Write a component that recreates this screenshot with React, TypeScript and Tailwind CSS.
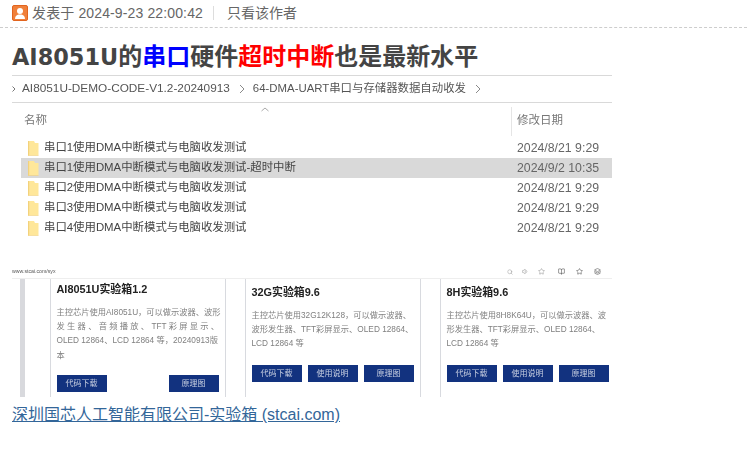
import { BookOpen, Heart, Layers, Search, Star, Volume1 } from "lucide-react";

const cjk = "font-['Liberation_Sans','Noto_Sans_CJK_SC',sans-serif]";

const folders = [
  { name: "串口1使用DMA中断模式与电脑收发测试", date: "2024/8/21 9:29" },
  { name: "串口1使用DMA中断模式与电脑收发测试-超时中断", date: "2024/9/2 10:35", active: true },
  { name: "串口2使用DMA中断模式与电脑收发测试", date: "2024/8/21 9:29" },
  { name: "串口3使用DMA中断模式与电脑收发测试", date: "2024/8/21 9:29" },
  { name: "串口4使用DMA中断模式与电脑收发测试", date: "2024/8/21 9:29" },
];

function FolderIcon() {
  return (
    <svg width="12" height="16" viewBox="0 0 12 16" className="shrink-0">
      <path d="M1 1h6l1 2h3.500v12.500H1z" fill="#ffe79a" />
      <path d="M1 1h1.200v14.500H1z" fill="#f2d27c" />
      <path d="M1 15h10.500v.5H1z" fill="#eccb78" />
    </svg>
  );
}

function AuthorIcon() {
  return (
    <svg width="16" height="16" viewBox="0 0 16 16" className="shrink-0 mt-[-1px]">
      <rect x="0.500" y="0.500" width="15" height="15" rx="1.500" fill="#f0803a" stroke="#e2641e" />
      <circle cx="8" cy="6" r="3" fill="#fff" />
      <path d="M3 14c0-3 2-4 3.500-4.500h3C11 10 13 11 13 14z" fill="#fff" />
    </svg>
  );
}

function Chevron() {
  return (
    <svg width="6" height="10" viewBox="0 0 6 10" className="shrink-0">
      <path d="M1 1l4 4-4 4" fill="none" stroke="#8a8a8a" strokeWidth="1" />
    </svg>
  );
}

function CardButton({ label }: { label: string }) {
  return (
    <div className="w-[50px] h-[17px] bg-[#12327f] text-white/75 text-[8px] leading-[17px] text-center">
      {label}
    </div>
  );
}

function Card({
  title,
  lines,
  buttons,
  spread,
  marginTop,
}: {
  title: string;
  lines: string[];
  buttons: string[];
  spread?: boolean;
  marginTop: string;
}) {
  return (
    <div className="w-[176px] shrink-0 h-full border-x border-[#d8dadf] pl-[5.500px] pr-[6.500px] bg-white">
      <div className={`text-[10.900px] font-bold text-[#222] leading-[16px] ${marginTop}`}>{title}</div>
      <div className="mt-[9px] text-[8.250px] leading-[14.200px] text-[#808080] h-[56px]">
        {lines.map((line) => (
          <div key={line} className="whitespace-nowrap">
            {line}
          </div>
        ))}
      </div>
      <div className={`flex ${spread ? "justify-between mt-[13px]" : "gap-[6px] mt-[0px]"}`}>
        {buttons.map((b) => (
          <CardButton key={b} label={b} />
        ))}
      </div>
    </div>
  );
}

export default function App() {
  return (
    <div className={`w-[747px] h-[465px] bg-white overflow-hidden ${cjk}`}>
      {/* post header */}
      <div className="h-[28px] pl-[12px] pb-[1px] border-b border-dashed border-[#cdcdcd] flex items-center text-[14px] text-[#666]">
        <AuthorIcon />
        <span className="ml-[4px] tracking-[0.13px]">发表于 2024-9-23 22:00:42</span>
        <span className="ml-[10px] mr-[13px] w-px h-[14px] bg-[#ddd]" />
        <span>只看该作者</span>
      </div>

      <div className="pl-[12px]">
        <h1 className="h-[47px] pt-[13px] text-[24px] leading-[32px] font-bold text-[#444]">
          <span className="font-['DejaVu_Sans'] text-[22.400px]">AI8051U</span>的
          <span className="text-[#0000ff]">串口</span>硬件
          <span className="text-[#ff0000]">超时中断</span>也是最新水平
        </h1>

        {/* explorer screenshot */}
        <div className="w-[600px] h-[165px] blur-[0.3px] overflow-hidden">
          <div className="h-[28px] border-y border-[#d9d9d9] flex items-center text-[#555]">
            <svg width="4" height="6" viewBox="0 0 4 6" className="shrink-0">
              <path d="M0.500 0.500l2.500 2.500-2.500 2.500" fill="none" stroke="#777" />
            </svg>
            <span className="ml-[6px] text-[11.800px]">AI8051U-DEMO-CODE-V1.2-20240913</span>
            <span className="ml-[9px] mr-[8px]">
              <Chevron />
            </span>
            <span className="text-[11.400px]">64-DMA-UART串口与存储器数据自动收发</span>
            <span className="ml-[9px]">
              <Chevron />
            </span>
          </div>
          <div className="h-[33px] pt-[4px] flex text-[11.500px] text-[#777]">
            <div className="relative w-[500px] pl-[12px] pt-[5px] border-r border-[#e5e5e5]">
              名称
              <svg width="8" height="5" viewBox="0 0 8 5" className="absolute left-[249px] top-[0px]">
                <path d="M0.500 4l3.500-3 3.500 3" fill="none" stroke="#aaa" />
              </svg>
            </div>
            <div className="pl-[5px] pt-[5px]">修改日期</div>
          </div>
          <div className="mt-[2px] flex flex-col text-[11.400px]">
            {folders.map((f) => (
              <div
                key={f.name}
                className={`h-[20px] flex items-center ml-[9px] pl-[6px] ${f.active ? "bg-[#d9d9d9]" : ""}`}
              >
                <FolderIcon />
                <span className="ml-[5px] w-[473px] text-[#444] whitespace-nowrap">{f.name}</span>
                <span className="text-[12.300px] text-[#666]">{f.date}</span>
              </div>
            ))}
          </div>
        </div>

        {/* product page screenshot */}
        <div className="mt-[25px] w-[600px] h-[132px] blur-[0.4px] overflow-hidden">
          <div className="h-[14px] border-b border-[#eee] flex items-center text-[#999]">
            <span className="text-[5.200px] text-[#555] w-[495px] shrink-0">www.stcai.com/syx</span>
            <div className="flex items-center gap-[9px] shrink-0">
              <Search size={6} />
              <Volume1 size={7} />
              <Star size={7} />
            </div>
            <div className="flex items-center gap-[11px] ml-[13px] text-[#555] shrink-0">
              <BookOpen size={7} />
              <Star size={7} />
              <Layers size={7} />
              <Heart size={7} />
            </div>
          </div>
          <div className="h-[118px] flex overflow-hidden">
            <div className="w-[8px] shrink-0" />
            <div className="w-[5px] shrink-0 h-full bg-[#d8d9dd]" />
            <div className="w-[25px] shrink-0" />
            <Card
              title="AI8051U实验箱1.2"
              lines={["主控芯片使用AI8051U，可以做示波器、波形", "发 生 器 、 音 频 播 放 、 TFT 彩 屏 显 示 、", "OLED 12864、LCD 12864 等，20240913版", "本"]}
              buttons={["代码下载", "原理图"]}
              spread
              marginTop="mt-[2px]"
            />
            <div className="w-[19px] shrink-0" />
            <Card
              title="32G实验箱9.6"
              lines={["主控芯片使用32G12K128，可以做示波器、", "波形发生器、TFT彩屏显示、OLED 12864、", "LCD 12864 等"]}
              buttons={["代码下载", "使用说明", "原理图"]}
              marginTop="mt-[5px]"
            />
            <div className="w-[19px] shrink-0" />
            <Card
              title="8H实验箱9.6"
              lines={["主控芯片使用8H8K64U，可以做示波器、波", "形发生器、TFT彩屏显示、OLED 12864、", "LCD 12864 等"]}
              buttons={["代码下载", "使用说明", "原理图"]}
              marginTop="mt-[5px]"
            />
          </div>
        </div>

        <div className="mt-[7px] text-[16px] leading-[22px]">
          <a className="text-[#336699] underline">深圳国芯人工智能有限公司-实验箱 (stcai.com)</a>
        </div>
      </div>
    </div>
  );
}
